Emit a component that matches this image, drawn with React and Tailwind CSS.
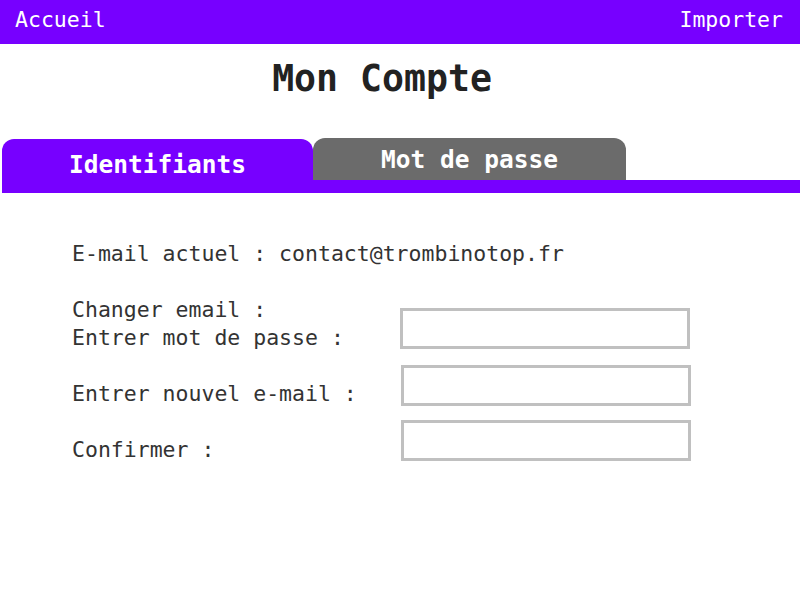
import React from "react";

const mono = { fontFamily: '"DejaVu Sans Mono", monospace' };

const Field = () => (
  <div className="w-[290px] h-[41px] border-[3px] border-[#c0c0c0] bg-white" />
);

export default function App() {
  return (
    <div className="w-[800px] h-[600px] bg-white overflow-hidden" style={mono}>
      {/* Top bar */}
      <div className="h-[44px] bg-[#7700ff] flex items-center justify-between pl-[15px] pr-[17px] pb-[3px] text-white text-[21.5px]">
        <span>Accueil</span>
        <span>Importer</span>
      </div>

      {/* Title */}
      <div className="h-[94px] flex items-center justify-center pr-[36px] pb-[24px]">
        <h1 className="text-[36.5px] font-bold text-[#222]">Mon Compte</h1>
      </div>

      {/* Tabs */}
      <div className="ml-[2px]">
        <div className="flex items-end">
          <div className="w-[311px] h-[41px] bg-[#7700ff] rounded-t-[12px] flex items-center justify-center pt-[11px] text-white text-[24.5px] font-bold">
            Identifiants
          </div>
          <div className="w-[313px] h-[42px] bg-[#6b6b6b] rounded-t-[12px] flex items-center justify-center text-white text-[24.5px] font-bold pt-[2px]">
            Mot de passe
          </div>
        </div>
        <div className="h-[13px] bg-[#7700ff]" />
      </div>

      {/* Form */}
      <div className="pl-[72px] pt-[47px] text-[21.5px] leading-[28px] text-[#333]">
        <p>E-mail actuel : contact@trombinotop.fr</p>

        <div className="flex items-start mt-[28px]">
          <div className="w-[328px]">
            <p>Changer email :</p>
            <p>Entrer mot de passe :</p>
          </div>
          <div className="mt-[12px]">
            <Field />
          </div>
        </div>

        <div className="flex items-start mt-[13px]">
          <p className="w-[329px] mt-[15px]">Entrer nouvel e-mail :</p>
          <Field />
        </div>

        <div className="flex items-start mt-[12px]">
          <p className="w-[329px] mt-[16px]">Confirmer :</p>
          <Field />
        </div>
      </div>
    </div>
  );
}
